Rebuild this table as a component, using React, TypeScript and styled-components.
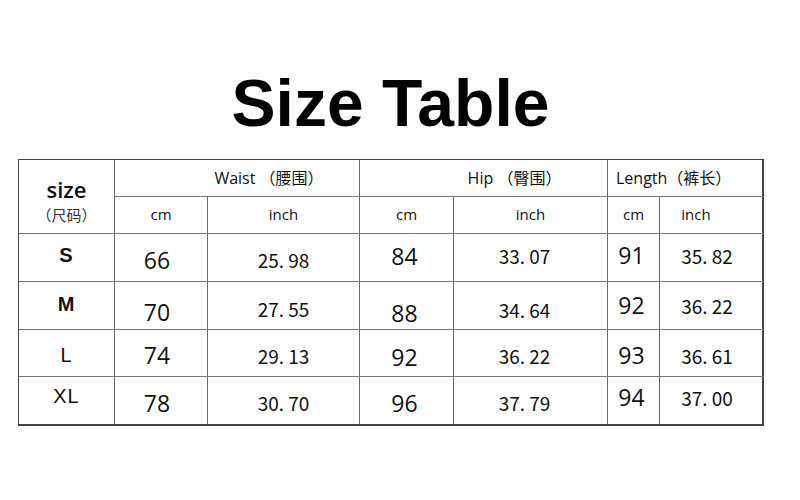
import { FC } from "react";
import styled, { createGlobalStyle } from "styled-components";

const Global = createGlobalStyle`
    body {
        margin: 0;
        background: #fff;
        color: #111;
        font-family: "Open Sans", "Noto Sans CJK SC", sans-serif;
    }
`;

const Page = styled.div`
    width: 800px;
    height: 500px;
    padding: 70px 0 0 18px;
    box-sizing: border-box;
`;

const Sheet = styled.div`
    width: 745px;
    display: flex;
    flex-direction: column;
    gap: 23px;
`;

const Title = styled.h1`
    margin: 0;
    font-family: "Liberation Sans", Arial, sans-serif;
    font-weight: 700;
    font-size: 66px;
    line-height: 66px;
    text-align: center;
    color: #000;
`;

const Grid = styled.div`
    display: grid;
    grid-template-columns: 96px 93px 152px 94px 154px 52px 104px;
    grid-template-rows: 37px 37px 48px 48px 47px 47px;
    border: 1px solid #444;
    border-right-width: 2px;
    border-bottom-width: 2px;
    box-sizing: border-box;
    width: 746px;
`;

type CellProps = {
    $span?: number;
    $rows?: number;
    $align?: "center" | "left";
    $pad?: number;
    $dy?: number;
    $last?: boolean;
    $bottom?: boolean;
};

const Cell = styled.div<CellProps>`
    grid-column: span ${(p) => p.$span ?? 1};
    grid-row: span ${(p) => p.$rows ?? 1};
    display: flex;
    flex-direction: column;
    align-items: ${(p) => (p.$align === "left" ? "flex-start" : "center")};
    justify-content: center;
    padding-left: ${(p) => p.$pad ?? 0}px;
    padding-top: ${(p) => Math.max(p.$dy ?? 0, 0) * 2}px;
    padding-bottom: ${(p) => Math.max(-(p.$dy ?? 0), 0) * 2}px;
    border-right: ${(p) => (p.$last ? "none" : "1px solid #6a6a6a")};
    border-bottom: ${(p) => (p.$bottom ? "none" : "1px solid #777")};
    box-sizing: border-box;
    white-space: pre;
`;

const SizeWord = styled.span`
    font-size: 22px;
    line-height: 30px;
    font-weight: 600;
    color: #111;
`;

const SizeSub = styled.span`
    font-family: "Noto Sans CJK SC", sans-serif;
    font-size: 15px;
    line-height: 22px;
    color: #333;
`;

const Head = styled.span`
    font-family: "Open Sans", "Noto Sans CJK SC", sans-serif;
    font-size: 16px;
    color: #111;
`;

const Unit = styled.span<{ $shift?: number }>`
    font-size: 15px;
    margin-right: ${(p) => p.$shift ?? 0}px;
    color: #111;
`;

const Label = styled.span<{ $bold?: boolean }>`
    font-family: "Liberation Sans", Arial, sans-serif;
    font-size: 20px;
    font-weight: ${(p) => (p.$bold ? 700 : 400)};
    letter-spacing: 1px;
    color: #111;
`;

const Value = styled.span<{ $dx: number }>`
    margin-left: ${(p) => p.$dx}px;
`;

const Cm = styled.span`
    font-size: 23px;
    color: #111;
`;

const Inch = styled.span`
    font-family: "Noto Sans CJK SC", sans-serif;
    font-size: 19px;
    color: #111;
`;

type Row = {
    size: string;
    bold: boolean;
    sizeDy: number;
    cells: [string, number][];
};

const rows: Row[] = [
    { size: "S", bold: true, sizeDy: -2, cells: [["66", 2], ["25. 98", 2], ["84", -2], ["33. 07", -2], ["91", -3], ["35. 82", -2]] },
    { size: "M", bold: true, sizeDy: -1, cells: [["70", 6], ["27. 55", 3], ["88", 7], ["34. 64", 4], ["92", -1], ["36. 22", 0]] },
    { size: "L", bold: false, sizeDy: 2, cells: [["74", 2], ["29. 13", 2], ["92", 4], ["36. 22", 2], ["93", 2], ["36. 61", 2]] },
    { size: "XL", bold: false, sizeDy: -4, cells: [["78", 2], ["30. 70", 2], ["96", 2], ["37. 79", 2], ["94", -4], ["37. 00", -3]] },
];

const colDx = [-8, 0, -4, -12, -4, -10];
const units = ["cm", "inch", "cm", "inch", "cm", "inch"];

const App: FC = () => {
    return (
        <Page>
            <Global />
            <Sheet>
                <Title>Size Table</Title>
                <Grid>
                    <Cell $rows={2} $dy={3}>
                        <SizeWord>size</SizeWord>
                        <SizeSub>（尺码）</SizeSub>
                    </Cell>
                    <Cell $span={2} $pad={64} $dy={-1}>
                        <Head>Waist （腰围）</Head>
                    </Cell>
                    <Cell $span={2} $pad={62} $dy={-1}>
                        <Head>Hip （臀围）</Head>
                    </Cell>
                    <Cell $span={2} $align="left" $pad={8} $last $dy={-1}>
                        <Head>Length（裤长）</Head>
                    </Cell>
                    {units.map((u, i) => (
                        <Cell key={i} $last={i === 5} $dy={-1}>
                            <Unit $shift={i === 5 ? 32 : 0}>{u}</Unit>
                        </Cell>
                    ))}
                    {rows.map((r, ri) => [
                        <Cell key={r.size} $dy={r.sizeDy} $bottom={ri === rows.length - 1}>
                            <Label $bold={r.bold}>{r.size}</Label>
                        </Cell>,
                        ...r.cells.map(([v, dy], ci) => (
                            <Cell
                                key={r.size + ci}
                                $dy={dy}
                                $last={ci === 5}
                                $bottom={ri === rows.length - 1}
                            >
                                <Value $dx={colDx[ci]}>
                                    {ci % 2 === 0 ? <Cm>{v}</Cm> : <Inch>{v}</Inch>}
                                </Value>
                            </Cell>
                        )),
                    ])}
                </Grid>
            </Sheet>
        </Page>
    );
};

export default App;
